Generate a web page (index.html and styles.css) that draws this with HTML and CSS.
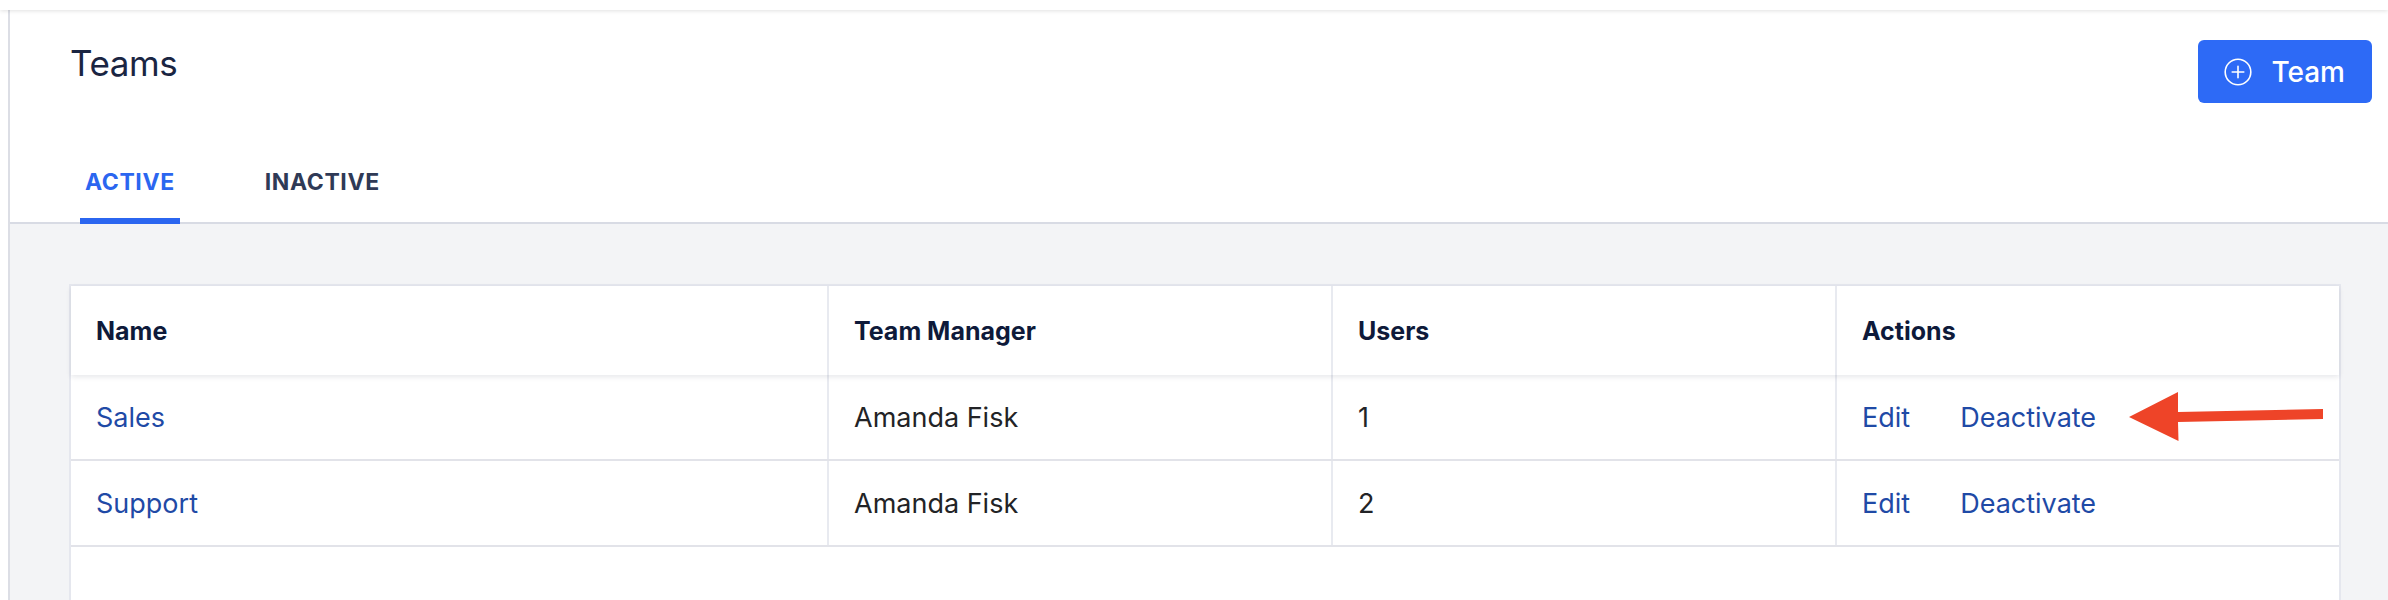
FILE: index.html
```html
<!DOCTYPE html>
<html lang="en">
<head>
<meta charset="utf-8">
<title>Teams</title>
<link rel="stylesheet" href="styles.css">
</head>
<body>
<div class="topbar"></div>
<div class="main">
  <header class="page-header">
    <div class="title-row">
      <h1 class="title">Teams</h1>
      <button class="btn-primary" type="button">
        <svg class="btn-icon" viewBox="0 0 28 28" width="28" height="28" aria-hidden="true">
          <circle cx="14" cy="14" r="12.8" fill="none" stroke="#fff" stroke-width="1.6"/>
          <path d="M14 8.2v11.6M8.2 14h11.6" stroke="#fff" stroke-width="1.6" stroke-linecap="round"/>
        </svg>
        <span>Team</span>
      </button>
    </div>
    <nav class="tabs">
      <a class="tab tab-active">ACTIVE</a>
      <a class="tab">INACTIVE</a>
    </nav>
  </header>
  <section class="content">
    <div class="table-card">
      <div class="row row-head">
        <div class="cell">Name</div>
        <div class="cell">Team Manager</div>
        <div class="cell">Users</div>
        <div class="cell">Actions</div>
      </div>
      <div class="row">
        <div class="cell"><a class="link">Sales</a></div>
        <div class="cell">Amanda Fisk</div>
        <div class="cell">1</div>
        <div class="cell actions">
          <a class="link">Edit</a><a class="link">Deactivate</a>
          <svg class="arrow" viewBox="0 0 194 50" width="194" height="50" aria-hidden="true">
            <polygon points="0,25 49,0 49,20 194,17 194,27 49,30 49.5,49" fill="#ee4428"/>
          </svg>
        </div>
      </div>
      <div class="row">
        <div class="cell"><a class="link">Support</a></div>
        <div class="cell">Amanda Fisk</div>
        <div class="cell">2</div>
        <div class="cell actions"><a class="link">Edit</a><a class="link">Deactivate</a></div>
      </div>
    </div>
  </section>
</div>
</body>
</html>
```

FILE: styles.css
```css
* { box-sizing: border-box; }

html, body {
  margin: 0;
  padding: 0;
  background: #ffffff;
  font-family: Inter, "Noto Sans", "Liberation Sans", sans-serif;
  overflow: hidden;
}

.topbar {
  height: 10px;
  background: #ffffff;
  box-shadow: 0 1px 4px rgba(0, 0, 0, 0.12);
  position: relative;
  z-index: 2;
}

.main {
  margin-left: 8px;
  border-left: 2px solid #dcdee5;
  background: #f3f4f6;
  min-height: 590px;
}

.page-header {
  background: #ffffff;
  border-bottom: 2px solid #d8dbe4;
  padding: 29px 16px 0 0;
}

.title-row {
  display: flex;
  justify-content: space-between;
  align-items: flex-start;
  height: 64px;
}

.title {
  margin: 1px 0 0 60px;
  font-size: 35px;
  line-height: 46px;
  font-weight: 400;
  letter-spacing: -0.4px;
  color: #1a2542;
}

.btn-primary {
  margin-top: 1px;
  height: 63px;
  display: flex;
  align-items: center;
  gap: 19px;
  padding: 0 27px 0 26px;
  border: 0;
  border-radius: 6px;
  background: #2d6af6;
  color: #ffffff;
  font-family: inherit;
  font-size: 28px;
  font-weight: 500;
}

.btn-icon { display: block; }

.tabs {
  display: flex;
  gap: 80px;
  margin: 64px 0 -2px 70px;
}

.tab {
  display: block;
  padding: 0 5px 21px;
  font-size: 23px;
  line-height: 30px;
  font-weight: 700;
  letter-spacing: 0.6px;
  color: #2f3a56;
  border-bottom: 6px solid transparent;
}

.tab-active {
  color: #2b66f0;
  border-bottom-color: #2b66f0;
}

.content {
  padding: 60px 47px 0 59px;
}

.table-card {
  background: #ffffff;
  border: 2px solid #e5e7ee;
  border-bottom: 0;
  min-height: 330px;
}

.row {
  display: grid;
  grid-template-columns: 3fr 2fr 2fr 2fr;
  height: 86px;
  border-bottom: 2px solid #e2e3e9;
  align-items: stretch;
}

.row-head {
  height: 89px;
  border-bottom: 0;
  box-shadow: 0 2px 5px rgba(20, 30, 60, 0.10);
  position: relative;
  z-index: 1;
}

.cell {
  display: flex;
  align-items: center;
  padding: 0 25px;
  font-size: 27px;
  color: #222326;
}

.row-head .cell {
  font-size: 25px;
  font-weight: 700;
  color: #0e1a3a;
}

.cell + .cell {
  border-left: 2px solid #e8eaf0;
}

.link {
  color: #1f4aa6;
  text-decoration: none;
}

.actions {
  position: relative;
  gap: 50px;
}

.arrow {
  position: absolute;
  left: 292px;
  top: 17px;
}
```
